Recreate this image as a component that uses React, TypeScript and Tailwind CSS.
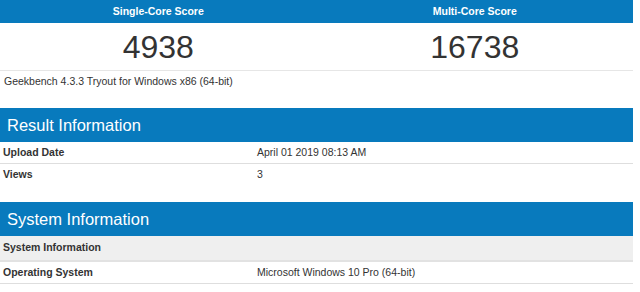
const blue = "bg-[#087abd]";

function SectionHeader({ title }: { title: string }) {
  return (
    <div className={`${blue} h-[34px] flex items-center px-[7px] text-white text-[16.5px] leading-none`}>
      {title}
    </div>
  );
}

function Row({ label, value }: { label: string; value: string }) {
  return (
    <div className="flex h-[22px] items-center border-b border-[#dedede] text-[10.5px]">
      <div className="w-[257px] pl-[3px] font-bold">{label}</div>
      <div>{value}</div>
    </div>
  );
}

export default function App() {
  return (
    <div
      className="w-[640px] h-[292px] overflow-hidden bg-white text-[#333]"
      style={{ fontFamily: '"Liberation Sans", Arial, sans-serif' }}
    >
      <div className="w-[633px]">
        {/* scores */}
        <div className="grid grid-cols-2 border-b border-[#e6e6e6]">
          {[
            { title: "Single-Core Score", score: "4938" },
            { title: "Multi-Core Score", score: "16738" },
          ].map((s) => (
            <div key={s.title}>
              <div className={`${blue} h-[23px] flex items-center justify-center text-white font-bold text-[10.5px]`}>
                {s.title}
              </div>
              <div className="h-[47px] flex items-center justify-center text-[32px] leading-none text-[#333]">
                {s.score}
              </div>
            </div>
          ))}
        </div>
        <div className="h-[21px] flex items-center pl-[4px] text-[10.5px]">
          Geekbench 4.3.3 Tryout for Windows x86 (64-bit)
        </div>

        <div className="mt-[16px]">
          <SectionHeader title="Result Information" />
          <Row label="Upload Date" value="April 01 2019 08:13 AM" />
          <div className="flex h-[22px] items-center text-[10.5px]">
            <div className="w-[257px] pl-[3px] font-bold">Views</div>
            <div>3</div>
          </div>
        </div>

        <div className="mt-[16px]">
          <SectionHeader title="System Information" />
          <div className="h-[26px] flex items-center pl-[3px] bg-[#efefef] border-b-2 border-[#e2e2e2] font-bold text-[10.5px]">
            System Information
          </div>
          <Row label="Operating System" value="Microsoft Windows 10 Pro (64-bit)" />
        </div>
      </div>
    </div>
  );
}
